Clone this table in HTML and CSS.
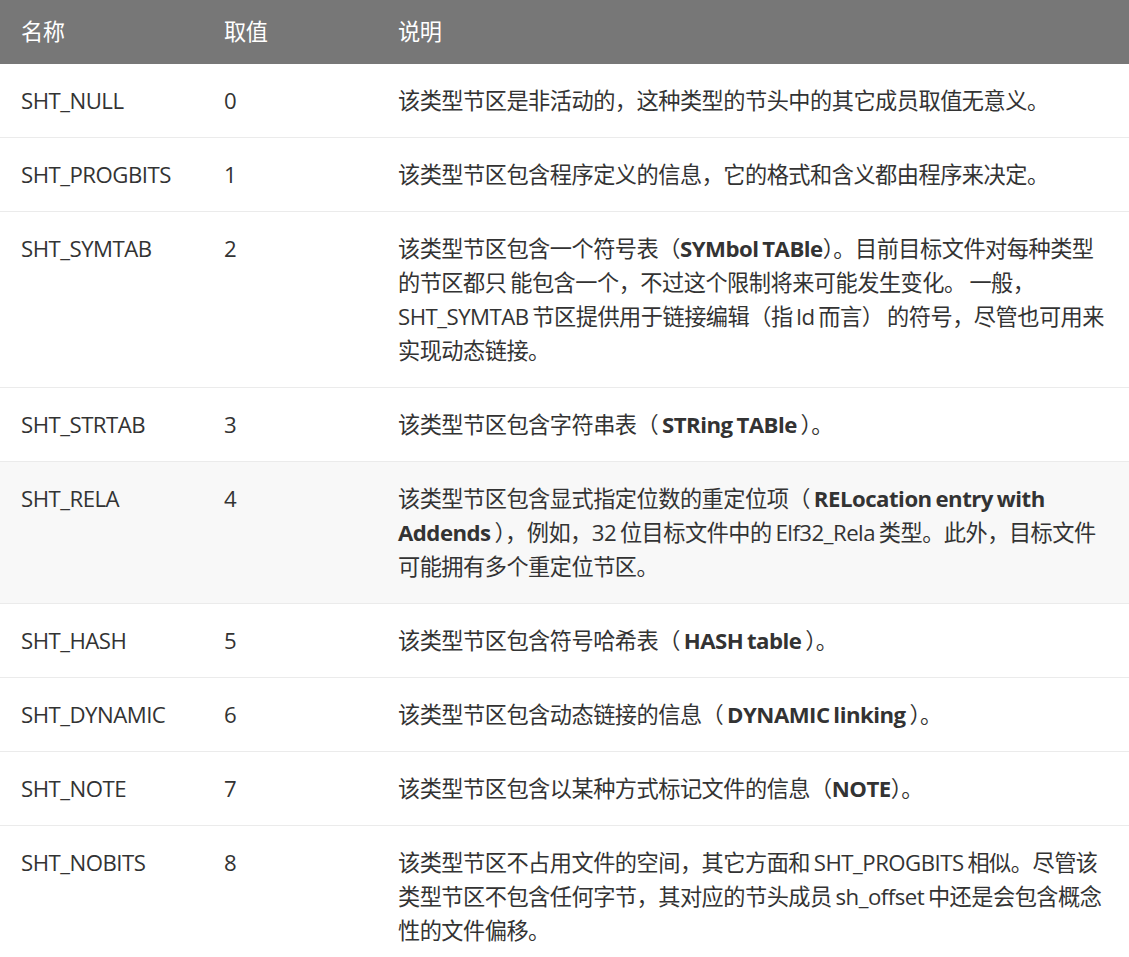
FILE: index.html
```html
<!DOCTYPE html>
<html lang="zh-CN">
<head>
<meta charset="utf-8">
<title>节区类型</title>
<link rel="stylesheet" href="styles.css">
</head>
<body>
<table class="sec-table">
  <colgroup>
    <col class="c-name">
    <col class="c-val">
    <col class="c-desc">
  </colgroup>
  <thead>
    <tr><th>名称</th><th>取值</th><th>说明</th></tr>
  </thead>
  <tbody>
    <tr><td>SHT_NULL</td><td>0</td><td>该类型节区是非活动的，这种类型的节头中的其它成员取值无意义。</td></tr>
    <tr><td>SHT_PROGBITS</td><td>1</td><td>该类型节区包含程序定义的信息，它的格式和含义都由程序来决定。</td></tr>
    <tr><td>SHT_SYMTAB</td><td>2</td><td>该类型节区包含一个符号表（<strong>SYMbol TABle</strong>）。目前目标文件对每种类型的节区都只 能包含一个，不过这个限制将来可能发生变化。 一般， SHT_SYMTAB 节区提供用于链接编辑（指 ld 而言） 的符号，尽管也可用来实现动态链接。</td></tr>
    <tr><td>SHT_STRTAB</td><td>3</td><td>该类型节区包含字符串表（ <strong>STRing TABle</strong> ）。</td></tr>
    <tr class="hl"><td>SHT_RELA</td><td>4</td><td>该类型节区包含显式指定位数的重定位项（ <strong>RELocation entry with Addends</strong> ），例如，32 位目标文件中的 Elf32_Rela 类型。此外，目标文件可能拥有多个重定位节区。</td></tr>
    <tr><td>SHT_HASH</td><td>5</td><td>该类型节区包含符号哈希表（ <strong>HASH table</strong> ）。</td></tr>
    <tr><td>SHT_DYNAMIC</td><td>6</td><td>该类型节区包含动态链接的信息（ <strong>DYNAMIC linking</strong> ）。</td></tr>
    <tr><td>SHT_NOTE</td><td>7</td><td>该类型节区包含以某种方式标记文件的信息（<strong>NOTE</strong>）。</td></tr>
    <tr><td>SHT_NOBITS</td><td>8</td><td>该类型节区不占用文件的空间，其它方面和 SHT_PROGBITS 相似。尽管该类型节区不包含任何字节，其对应的节头成员 sh_offset 中还是会包含概念性的文件偏移。</td></tr>
  </tbody>
</table>
</body>
</html>
```

FILE: styles.css
```css
html, body {
  margin: 0;
  padding: 0;
  background: #fff;
}

body {
  font-family: "Open Sans", "Noto Sans", "Noto Sans CJK SC", sans-serif;
  font-size: 22.2px;
  letter-spacing: -0.5px;
  line-height: 34px;
  color: #333;
}

.sec-table {
  width: 100%;
  border-collapse: collapse;
  table-layout: fixed;
}

.c-name { width: 203px; }
.c-val { width: 174px; }

.sec-table th {
  background: #777;
  color: #fff;
  font-weight: normal;
  text-align: left;
  padding: 15px 21px;
  vertical-align: top;
}

.sec-table td {
  padding: 20px 21px 19px;
  vertical-align: top;
  word-spacing: -1.5px;
  border-bottom: 1px solid #ebebeb;
}

.sec-table tr.hl td {
  background: #f8f8f8;
}

.sec-table strong {
  font-weight: 700;
}
```
